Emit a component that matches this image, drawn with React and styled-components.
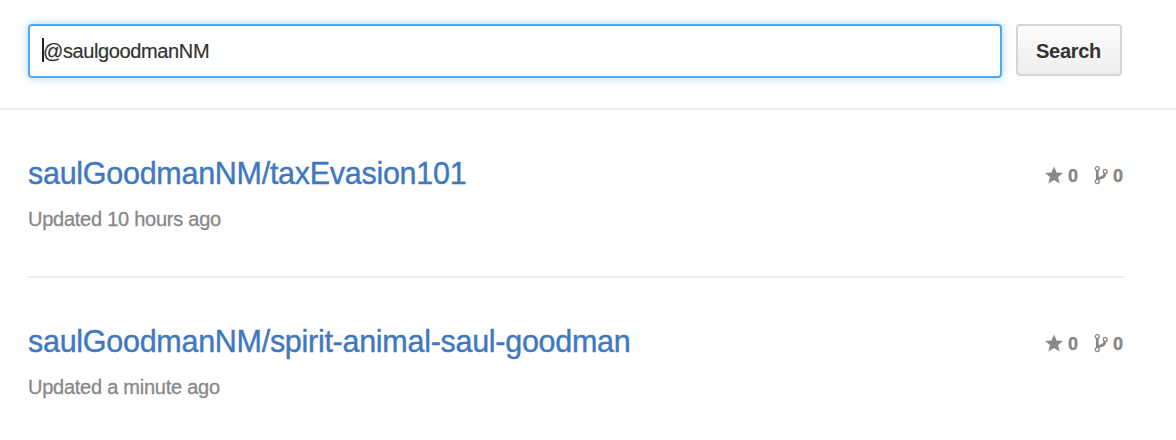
import React from "react";
import styled, { createGlobalStyle } from "styled-components";

const GlobalStyle = createGlobalStyle`
  body {
    margin: 0;
    background: #fff;
    font-family: "Liberation Sans", Arial, sans-serif;
    color: #333;
  }
`;

const Page = styled.main`
  height: 440px;
  overflow: hidden;
`;

const SearchBar = styled.form`
  display: flex;
  align-items: flex-start;
  gap: 14px;
  height: 84px;
  padding: 24px 0 0 28px;
  border-bottom: 2px solid #eee;
`;

const SearchField = styled.div`
  display: flex;
  align-items: center;
  box-sizing: border-box;
  width: 974px;
  height: 54px;
  padding: 0 12px;
  border: 2px solid #51a7e8;
  border-radius: 4px;
  box-shadow: 0 0 8px rgba(81, 167, 232, 0.5);
  font-size: 20px;
  letter-spacing: -0.38px;
  -webkit-text-stroke: 0.2px currentColor;
`;

const Caret = styled.span`
  width: 2px;
  height: 24px;
  margin: -3px -1px 0 0;
  background: #222;
`;

const SearchButton = styled.button`
  box-sizing: border-box;
  width: 106px;
  height: 52px;
  padding: 2px 1px 0 0;
  border: 2px solid #d5d5d5;
  border-radius: 4px;
  background: linear-gradient(#fcfcfc, #eee);
  color: #333;
  font: bold 20px "Liberation Sans", Arial, sans-serif;
  letter-spacing: -0.3px;
`;

const RepoList = styled.ul`
  list-style: none;
  margin: 0;
  padding: 0 52px 0 28px;
`;

const RepoItem = styled.li`
  display: flex;
  justify-content: space-between;
  align-items: flex-start;
  box-sizing: border-box;
  height: 168px;
  padding-top: 45px;
  border-bottom: 2px solid #eee;
`;

const RepoName = styled.h3`
  margin: 0;
  color: #4078c0;
  font-size: 30.5px;
  font-weight: normal;
  line-height: 36px;
  letter-spacing: -0.28px;
  -webkit-text-stroke: 0.4px currentColor;
`;

const Updated = styled.p`
  margin: 16px 0 0;
  color: #888;
  font-size: 20px;
  line-height: 24px;
  letter-spacing: -0.25px;
  -webkit-text-stroke: 0.3px currentColor;
`;

const Stats = styled.div`
  display: flex;
  gap: 16px;
  padding: 10px 1px 0 0;
  color: #888;
  font-size: 18px;
  font-weight: bold;
  line-height: 22px;
  -webkit-text-stroke: 0.4px currentColor;
`;

const Stat = styled.span`
  display: flex;
  align-items: center;
  gap: 5px;

  svg {
    margin-top: -2px;
  }
`;

const StarIcon = () => (
  <svg width="18" height="18" viewBox="0 0 18 18" fill="currentColor">
    <path d="M9 .4l2.5 6 6.5.5-5 4.2 1.7 6.4L9 14l-5.7 3.5L5 11.1 0 6.9l6.5-.5z" />
  </svg>
);

const ForkIcon = () => (
  <svg width="14" height="20" viewBox="0 0 14 20" fill="none" stroke="currentColor">
    <circle cx="3.3" cy="3.6" r="2" strokeWidth="1.3" />
    <circle cx="11.2" cy="6.4" r="2" strokeWidth="1.3" />
    <circle cx="3.3" cy="16.6" r="2" strokeWidth="1.3" />
    <path d="M3.3 5.6v9M11 8.4c-.2 3.2-2.1 4-4.4 4.5-1.7.3-2.7.8-3.2 1.7" strokeWidth="2.7" />
  </svg>
);

const repos = [
  { name: "saulGoodmanNM/taxEvasion101", updated: "Updated 10 hours ago" },
  { name: "saulGoodmanNM/spirit-animal-saul-goodman", updated: "Updated a minute ago" },
];

export default function App() {
  return (
    <Page>
      <GlobalStyle />
      <SearchBar>
        <SearchField>
          <Caret />
          @saulgoodmanNM
        </SearchField>
        <SearchButton type="button">Search</SearchButton>
      </SearchBar>
      <RepoList>
        {repos.map((repo) => (
          <RepoItem key={repo.name}>
            <div>
              <RepoName>{repo.name}</RepoName>
              <Updated>{repo.updated}</Updated>
            </div>
            <Stats>
              <Stat>
                <StarIcon />0
              </Stat>
              <Stat>
                <ForkIcon />0
              </Stat>
            </Stats>
          </RepoItem>
        ))}
      </RepoList>
    </Page>
  );
}
